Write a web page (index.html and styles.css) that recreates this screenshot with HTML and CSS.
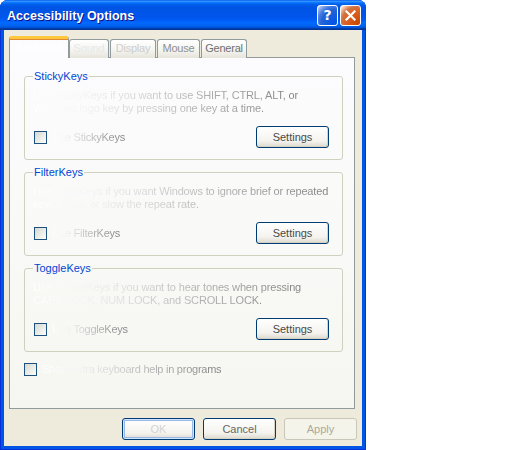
FILE: index.html
```html
<!DOCTYPE html>
<html>
<head>
<meta charset="utf-8">
<link rel="stylesheet" href="styles.css">
</head>
<body>
<div class="window">
  <div class="titlebar">
    <span class="title">Accessibility Options</span>
    <div class="caption">
      <span class="cbtn help">?</span>
      <span class="cbtn close"><svg width="11" height="11" viewBox="0 0 11 11"><path d="M1.5 1.5 L9.5 9.5 M9.5 1.5 L1.5 9.5" stroke="#fff" stroke-width="2.2" stroke-linecap="square"/></svg></span>
    </div>
  </div>
  <div class="client">
    <div class="tabs">
      <div class="tab active">Keyboard</div>
      <div class="tab t-sound">Sound</div>
      <div class="tab t-display">Display</div>
      <div class="tab t-mouse">Mouse</div>
      <div class="tab t-general">General</div>
    </div>
    <div class="panel">
      <fieldset class="group">
        <legend>StickyKeys</legend>
        <p class="desc fade">Use StickyKeys if you want to use SHIFT, CTRL, ALT, or<br>Windows logo key by pressing one key at a time.</p>
        <div class="row">
          <label class="check"><span class="box"></span><span class="lbl fade">Use StickyKeys</span></label>
          <button class="btn">Settings</button>
        </div>
      </fieldset>
      <fieldset class="group">
        <legend>FilterKeys</legend>
        <p class="desc fade">Use FilterKeys if you want Windows to ignore brief or repeated<br>keystrokes, or slow the repeat rate.</p>
        <div class="row">
          <label class="check"><span class="box"></span><span class="lbl fade">Use FilterKeys</span></label>
          <button class="btn">Settings</button>
        </div>
      </fieldset>
      <fieldset class="group">
        <legend>ToggleKeys</legend>
        <p class="desc fade">Use ToggleKeys if you want to hear tones when pressing<br>CAPS LOCK, NUM LOCK, and SCROLL LOCK.</p>
        <div class="row">
          <label class="check"><span class="box"></span><span class="lbl fade">Use ToggleKeys</span></label>
          <button class="btn">Settings</button>
        </div>
      </fieldset>
      <label class="check extra"><span class="box"></span><span class="lbl fade">Show extra keyboard help in programs</span></label>
    </div>
    <div class="actions">
      <button class="btn default"><span class="fade-ok">OK</span></button>
      <button class="btn cancel">Cancel</button>
      <button class="btn disabled">Apply</button>
    </div>
  </div>
</div>
</body>
</html>
```
FILE: styles.css
```css
html, body {
  margin: 0;
  padding: 0;
  background: #ffffff;
}
body {
  font-family: "Liberation Sans", Arial, sans-serif;
  font-size: 11px;
}
.window {
  width: 366px;
  height: 450px;
  display: flex;
  flex-direction: column;
  background: #0055e5;
  border-radius: 8px 8px 0 0;
  box-shadow: inset 1px 0 #0831d9, inset -1px 0 #0831d9, inset 0 -1px #0831d9;
  overflow: hidden;
}
.titlebar {
  height: 30px;
  flex: none;
  display: flex;
  align-items: center;
  justify-content: space-between;
  padding: 0 5px 0 7px;
  background: linear-gradient(to bottom, #0058ee 0%, #3593ff 4%, #288eff 6%, #127dff 8%, #036ffc 10%, #0262ee 14%, #0057e5 20%, #0054e3 24%, #0055eb 56%, #005bf5 66%, #026afe 76%, #0062ef 86%, #0052d6 92%, #0040ab 94%, #003092 100%);
}
.title {
  color: #ffffff;
  font-weight: bold;
  font-size: 12.5px;
  text-shadow: 1px 1px #0f1089;
  padding-top: 1px;
}
.caption {
  display: flex;
  gap: 2px;
}
.cbtn {
  width: 19px;
  height: 19px;
  border: 1px solid #ffffff;
  border-radius: 3px;
  display: flex;
  align-items: center;
  justify-content: center;
  color: #ffffff;
  font-weight: bold;
  font-size: 14px;
  font-family: "DejaVu Sans", sans-serif;
}
.help {
  background: radial-gradient(circle at 90% 90%, #0054e9 0%, #2263d5 55%, #4479e4 70%, #a3bbec 90%, #ffffff 100%);
}
.close {
  background: radial-gradient(circle at 90% 90%, #cc4600 0%, #dc6527 55%, #cd7546 70%, #ffccb2 90%, #ffffff 100%);
}
.client {
  flex: 1;
  margin: 0 4px 4px 4px;
  background: #eeebdd;
  display: flex;
  flex-direction: column;
  padding: 6px 5px 6px 5px;
}
.tabs {
  display: flex;
  align-items: flex-end;
  gap: 1px;
  margin-bottom: -1px;
  position: relative;
  z-index: 1;
}
.tab {
  box-sizing: border-box;
  border: 1px solid #919b9c;
  border-bottom: none;
  border-radius: 3px 3px 0 0;
  background: linear-gradient(#ffffff, #f3f3ef 60%, #e6e4da);
  text-align: center;
  line-height: 16px;
  height: 19px;
  letter-spacing: -0.2px;
}
.tab.active {
  width: 60px;
  height: 22px;
  margin-right: -1px;
  background: #fcfcfe;
  border-top: 3px solid #ffc73c;
  box-shadow: inset 0 1px #e68b2c;
  color: #ffffff;
}
.t-sound { width: 40px; color: #e8e8e8; }
.t-display { width: 46px; color: #cdcdcd; }
.t-mouse { width: 43px; color: #909090; }
.t-general { width: 46px; color: #707070; }
.panel {
  flex: 1;
  margin: 0 2px 0 0;
  border: 1px solid #919b9c;
  background: linear-gradient(#fcfcfe, #f6f6f1);
  padding: 12px 11px 0 14px;
  display: flex;
  flex-direction: column;
  gap: 6px;
}
.group {
  margin: 0;
  border: 1px solid #d0d0bf;
  border-radius: 3px;
  padding: 0 8px 11px 8px;
  min-width: 0;
}
.group legend {
  padding: 0 1px;
  color: #0046d5;
  line-height: 13px;
}
.fade {
  color: transparent;
  background: linear-gradient(90deg, #ffffff 0%, #f4f4f4 20%, #b4b4b4 60%, #808080 100%);
  -webkit-background-clip: text;
  background-clip: text;
}
.desc {
  margin: 6px 0 0 0;
  line-height: 13px;
  white-space: nowrap;
  letter-spacing: -0.15px;
  display: inline-block;
  align-self: flex-start;
}
.row {
  display: flex;
  align-items: center;
  justify-content: space-between;
  margin-top: 11px;
  padding: 0 5px 0 1px;
}
.check {
  display: flex;
  align-items: center;
  gap: 5px;
}
.box {
  width: 13px;
  height: 13px;
  box-sizing: border-box;
  border: 1px solid #1c5180;
  background: linear-gradient(135deg, #d8d8d2, #f6f6f2 80%, #ffffff);
  flex: none;
}
.check .lbl {
  line-height: 13px;
  white-space: nowrap;
  letter-spacing: -0.25px;
}
.extra {
  margin-top: 5px;
}
.btn {
  width: 73px;
  height: 22px;
  font-family: "Liberation Sans", Arial, sans-serif;
  font-size: 11px;
  color: #4a4a4a;
  border: 1px solid #003c74;
  border-radius: 3px;
  background: linear-gradient(#ffffff, #f4f3ee 70%, #dcd8cc);
  box-shadow: inset -1px -1px #d6d0c5;
  padding: 0;
}
.actions {
  display: flex;
  justify-content: flex-end;
  gap: 8px;
  margin-top: 9px;
}
.btn.default {
  box-shadow: inset 0 0 0 1px #cee7ff, inset 0 0 0 2px #98b8ea;
}
.fade-ok {
  color: #d4d4d4;
}
.btn.cancel {
  color: #666666;
}
.btn.disabled {
  border-color: #c9c7ba;
  background: #f5f4ea;
  box-shadow: none;
  color: #aca899;
}
```
